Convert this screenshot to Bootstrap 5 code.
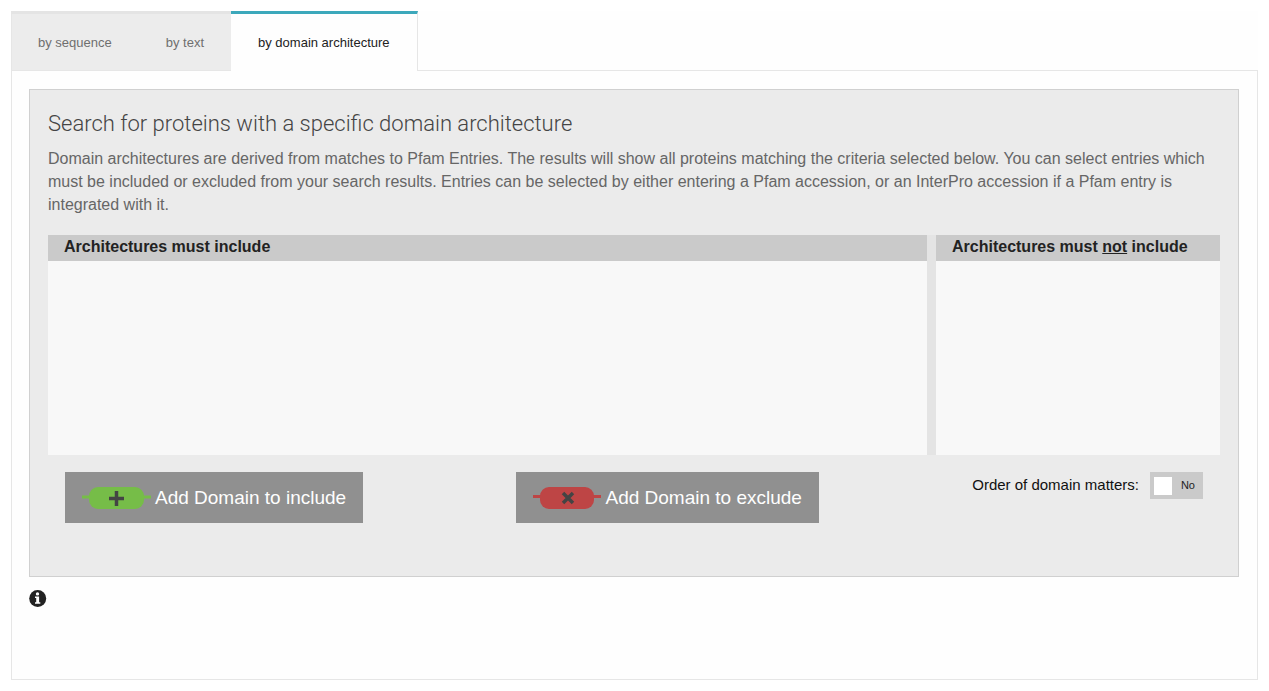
<!DOCTYPE html>
<html lang="en">
<head>
<meta charset="utf-8">
<meta name="viewport" content="width=device-width, initial-scale=1">
<title>Search by domain architecture</title>
<link href="https://cdn.jsdelivr.net/npm/bootstrap@5.3.0/dist/css/bootstrap.min.css" rel="stylesheet">
<style>
  body { font-family: "Liberation Sans", Arial, sans-serif; font-size: 16px; line-height: 23px; color: #666; background: #fff; padding: 11px; }
  .search-tabs { --bs-nav-tabs-border-width: 0; background: #fefefe; border-bottom: 1px solid #e6e6e6; }
  .search-tabs .nav-link { font-size: 13px; line-height: 20px; color: #6f6f6f; background: #ececec; border: 0; border-top: 3px solid #e4e4e4; border-radius: 0; margin-bottom: 0; padding: 19px 27px 17px; }
  .search-tabs .nav-item:first-child .nav-link { border-left: 1px solid #e6e6e6; padding-left: 26px; }
  .search-tabs .nav-link.active { color: #222; background: #fefefe; border-top-color: #3ca8bb; border-right: 1px solid #e6e6e6; margin-bottom: -1px; padding-bottom: 18px; }
  .tab-body { background: #fefefe; border: 1px solid #e6e6e6; border-top: 0; padding: 18px 18px 71px 17px; }
  .search-panel { background: #ebebeb; border: 1px solid #d0d0d0; padding: 19px 18px 53px; }
  .search-title { font-family: Roboto, "Liberation Sans", sans-serif; font-weight: 300; font-size: 22px; line-height: 30px; color: #444; margin-bottom: 8px; }
  .intro { margin-bottom: 19px; }
  .arch-box { background: #f8f8f8; min-height: 220px; }
  .arch-exclude { border-left: 9px solid #e4e4e4; }
  .arch-box h2 { background: #cacaca; color: #222; font-size: 16px; font-weight: 700; line-height: 24px; margin: 0; padding: 0 16px 2px; }
  .actions { padding: 17px 17px 0; }
  .domain-btn { --bs-btn-color: #fefefe; --bs-btn-bg: #909090; --bs-btn-hover-color: #fff; --bs-btn-hover-bg: #7d7d7d; --bs-btn-border-width: 0; --bs-btn-border-radius: 0; font-size: 19px; line-height: 23px; padding: 14px 17px; gap: 4px; }
  .order-group { gap: 11px; }
  .order-label { color: #111; font-size: 15px; line-height: 26px; }
  .order-switch { background: #cacaca; width: 53px; height: 27px; padding: 0 8px 0 4px; color: #222; font-size: 11px; cursor: pointer; }
  .order-switch input { appearance: none; background: #fff; width: 18px; height: 18px; margin: 0; }
  .info-link { margin-top: 13px; }
</style>
</head>
<body>
<ul class="nav nav-tabs search-tabs">
  <li class="nav-item"><a class="nav-link" href="#sequence">by sequence</a></li>
  <li class="nav-item"><a class="nav-link" href="#text">by text</a></li>
  <li class="nav-item"><a class="nav-link active" aria-current="page" href="#domain">by domain architecture</a></li>
</ul>
<main class="tab-body" id="domain">
  <section class="search-panel">
    <h1 class="search-title">Search for proteins with a specific domain architecture</h1>
    <p class="intro">Domain architectures are derived from matches to Pfam Entries. The results will show all proteins matching the criteria selected below. You can select entries which must be included or excluded from your search results. Entries can be selected by either entering a Pfam accession, or an InterPro accession if a Pfam entry is integrated with it.</p>
    <div class="row g-0">
      <div class="col-9 arch-box"><h2>Architectures must include</h2></div>
      <div class="col-3 arch-box arch-exclude"><h2>Architectures must <u>not</u> include</h2></div>
    </div>
    <div class="actions d-flex justify-content-between align-items-start">
      <button type="button" class="btn domain-btn d-flex align-items-center">
        <svg width="69" height="22" viewBox="0 0 69 22" aria-hidden="true">
          <path d="M0 8.500H69V11.500H0z" fill="#76bd48"/>
          <rect x="7" width="55" height="22" rx="9" fill="#76bd48"/>
          <path d="M27 11.500H42M34.500 4V19" stroke="#444" stroke-width="3.500"/>
        </svg>
        Add Domain to include
      </button>
      <button type="button" class="btn domain-btn d-flex align-items-center">
        <svg width="68" height="22" viewBox="0 0 68 22" aria-hidden="true">
          <path d="M0 8H68V11H0z" fill="#be4545"/>
          <rect x="7" width="54" height="22" rx="9" fill="#be4545"/>
          <path d="M30 6L40 16M40 6L30 16" stroke="#444" stroke-width="3.500"/>
        </svg>
        Add Domain to exclude
      </button>
      <div class="order-group d-flex">
        <label class="order-label" for="order">Order of domain matters:</label>
        <label class="order-switch d-flex align-items-center justify-content-between"><input type="checkbox" id="order" role="switch"><span>No</span></label>
      </div>
    </div>
  </section>
  <a class="info-link d-block" href="#help" aria-label="Help">
    <svg class="d-block" width="18" height="18" viewBox="0 0 18 18" aria-hidden="true">
      <circle cx="8.700" cy="8.500" r="8.500" fill="#222"/>
      <circle cx="8.500" cy="3.900" r="1.700" fill="#fefefe"/>
      <path d="M6 6.600H10.100V12.300H11.300V13.800H6V12.300H7.200V8.100H6z" fill="#fefefe"/>
    </svg>
  </a>
</main>
<script src="https://cdn.jsdelivr.net/npm/bootstrap@5.3.0/dist/js/bootstrap.bundle.min.js"></script>
</body>
</html>
